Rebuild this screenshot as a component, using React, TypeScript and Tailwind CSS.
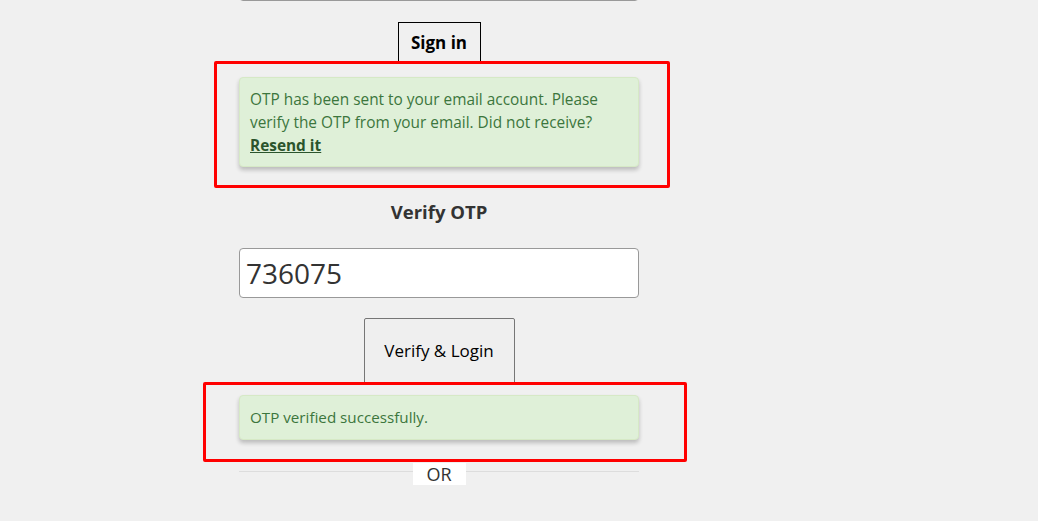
export default function App() {
  return (
    <div className="relative min-h-screen h-[521px] overflow-hidden bg-[#f0f0f0] font-['Open_Sans',sans-serif] text-[#333]">
      <div className="ml-[239px] w-[400px] flex flex-col items-center">
        {/* email input, scrolled mostly out of view */}
        <div className="-mt-[49px] h-[50px] w-full rounded-[4px] border border-[#999] bg-white" />

        <button className="mt-[21px] h-[42px] w-[83px] border border-black bg-transparent text-[17px] font-bold text-black">
          Sign in
        </button>

        <div className="mt-[13px] w-full rounded-[4px] border border-[#d6e9c6] bg-[#dff0d8] px-[10px] pt-[10px] pb-[9px] text-[15.4px] leading-[23px] text-[#3c763d] shadow-[0_3px_4px_rgba(0,0,0,0.22)]">
          OTP has been sent to your email account. Please verify the OTP from your email. Did not receive?{" "}
          <a href="#" className="font-bold text-[#2b542c] underline">
            Resend it
          </a>
        </div>

        <h3 className="mt-[33px] text-[18.5px] font-bold leading-[24px] text-[#333]">Verify OTP</h3>

        <input
          readOnly
          value="736075"
          className="mt-[24px] h-[50px] w-full rounded-[4px] border border-[#999] bg-white px-[6px] text-[28px] text-[#333] outline-none"
        />

        <button className="mt-[20px] h-[66px] w-[151px] rounded-[2px] border border-[#767676] bg-[#efefef] text-[17px] text-black">
          Verify &amp; Login
        </button>

        <div className="mt-[11px] w-full rounded-[4px] border border-[#d6e9c6] bg-[#dff0d8] px-[10px] py-[10px] text-[15.2px] leading-[23px] text-[#3c763d] shadow-[0_3px_4px_rgba(0,0,0,0.22)]">
          OTP verified successfully.
        </div>

        <div className="mt-[23px] flex h-[22px] w-full">
          <div className="mt-[8px] flex-1 border-t border-[#ddd]" />
          <span className="w-[53px] bg-white text-center text-[18px] leading-[22px] text-[#333]">OR</span>
          <div className="mt-[8px] flex-1 border-t border-[#ddd]" />
        </div>
      </div>

      {/* red annotation boxes */}
      <div className="absolute left-[214px] top-[61px] h-[127px] w-[456px] rounded-[2px] border-[3px] border-[#ff0000]" />
      <div className="absolute left-[203px] top-[382px] h-[80px] w-[484px] rounded-[2px] border-[3px] border-[#ff0000]" />
    </div>
  )
}
